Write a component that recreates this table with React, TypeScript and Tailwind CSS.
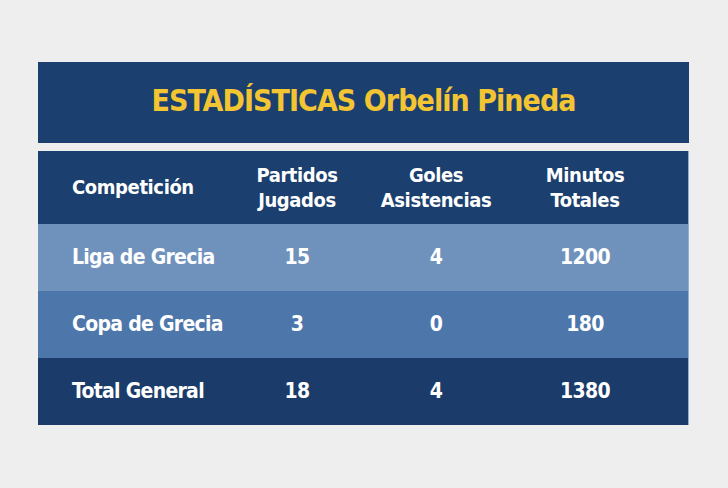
const rows = [
  { name: 'Liga de Grecia', pj: '15', goles: '4', min: '1200', bg: 'bg-[#6f92bd]' },
  { name: 'Copa de Grecia', pj: '3', goles: '0', min: '180', bg: 'bg-[#4d77aa]' },
  { name: 'Total General', pj: '18', goles: '4', min: '1380', bg: 'bg-[#1b3c6a]' },
];

const cols = 'grid grid-cols-[190px_138px_140px_158px_1fr] items-center whitespace-nowrap';

export default function App() {
  return (
    <div
      className="w-[728px] h-[488px] bg-[#eeeeee] pt-[62px] pl-[38px]"
      style={{ fontFamily: '"DejaVu Sans Condensed", "DejaVu Sans", sans-serif' }}
    >
      <div className="w-[651px]">
        {/* Title */}
        <div className="h-[81px] bg-[#1b3f6e] flex items-center justify-center pb-[4px]">
          <h1 className="text-[#f3c532] text-[30px] font-bold tracking-[-0.95px] leading-none">
            ESTADÍSTICAS Orbelín Pineda
          </h1>
        </div>

        {/* Table */}
        <div className="mt-[8px] text-white font-bold border-r border-[#8fb0d6]">
          <div className={`${cols} h-[73px] bg-[#1b3f6e] text-[20px] tracking-[-0.4px] leading-[25px] text-center`}>
            <div className="text-left pl-[34px]">Competición</div>
            <div>Partidos<br />Jugados</div>
            <div>Goles<br />Asistencias</div>
            <div>Minutos<br />Totales</div>
            <div />
          </div>
          {rows.map((r) => (
            <div key={r.name} className={`${cols} h-[67px] ${r.bg} text-[21px] tracking-[-0.7px] text-center`}>
              <div className="text-left pl-[34px]">{r.name}</div>
              <div>{r.pj}</div>
              <div>{r.goles}</div>
              <div>{r.min}</div>
              <div />
            </div>
          ))}
        </div>
      </div>
    </div>
  );
}
